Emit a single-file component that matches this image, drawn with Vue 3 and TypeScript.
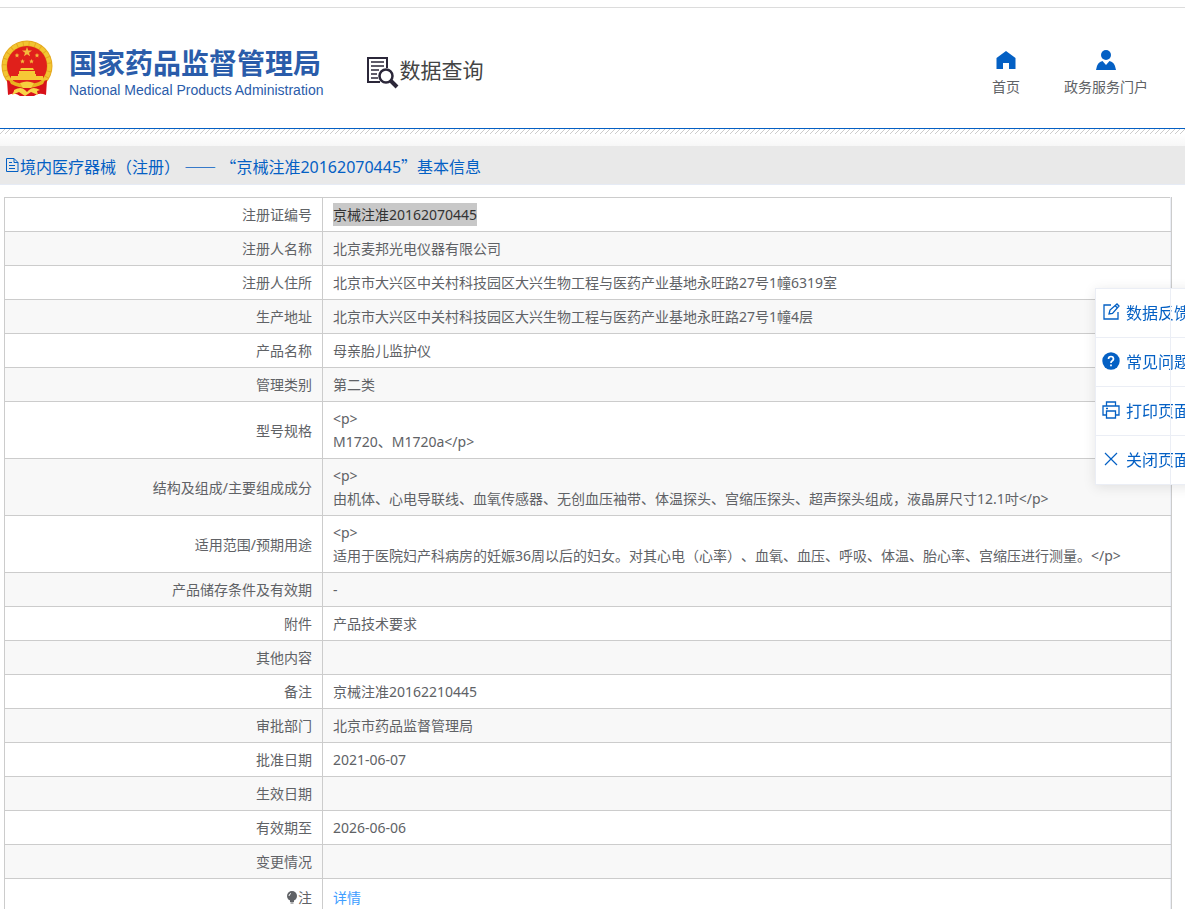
<script setup lang="ts">
interface Row {
  label: string
  value: string
  selected?: boolean
}

const rows: Row[] = [
  { label: '注册证编号', value: '京械注准20162070445', selected: true },
  { label: '注册人名称', value: '北京麦邦光电仪器有限公司' },
  { label: '注册人住所', value: '北京市大兴区中关村科技园区大兴生物工程与医药产业基地永旺路27号1幢6319室' },
  { label: '生产地址', value: '北京市大兴区中关村科技园区大兴生物工程与医药产业基地永旺路27号1幢4层' },
  { label: '产品名称', value: '母亲胎儿监护仪' },
  { label: '管理类别', value: '第二类' },
  { label: '型号规格', value: '<p>\nM1720、M1720a</p>' },
  { label: '结构及组成/主要组成成分', value: '<p>\n由机体、心电导联线、血氧传感器、无创血压袖带、体温探头、宫缩压探头、超声探头组成，液晶屏尺寸12.1吋</p>' },
  { label: '适用范围/预期用途', value: '<p>\n适用于医院妇产科病房的妊娠36周以后的妇女。对其心电（心率）、血氧、血压、呼吸、体温、胎心率、宫缩压进行测量。</p>' },
  { label: '产品储存条件及有效期', value: '-' },
  { label: '附件', value: '产品技术要求' },
  { label: '其他内容', value: '' },
  { label: '备注', value: '京械注准20162210445' },
  { label: '审批部门', value: '北京市药品监督管理局' },
  { label: '批准日期', value: '2021-06-07' },
  { label: '生效日期', value: '' },
  { label: '有效期至', value: '2026-06-06' },
  { label: '变更情况', value: '' },
]
</script>

<template>
  <div class="page" lang="zh-CN">
    <header class="header">
      <div class="brand">
        <svg class="emblem" viewBox="0 0 52 58" aria-hidden="true">
          <circle cx="26" cy="26" r="25.500" fill="#e5a81f" />
          <circle cx="26" cy="26" r="22.500" fill="none" stroke="#f2c531" stroke-width="4" stroke-dasharray="5 1" />
          <circle cx="26" cy="26" r="20" fill="#e0201b" />
          <path d="M6 40 L13 42 Q26 50 39 42 L46 40 L45 55 Q38 52 33 56 H19 Q14 52 7 55Z" fill="#d8121a" />
          <path d="M26 7l1.300 3.400h3.700l-3 2.300 1.100 3.600-3.100-2.100-3.100 2.100 1.100-3.600-3-2.300h3.700z" fill="#f5b93c" />
          <g fill="#f5b93c">
            <path d="M16 13l.7 1.500 1.600.2-1.200 1.100.3 1.600-1.400-.8-1.400.8.3-1.600-1.200-1.100 1.600-.2z" />
            <path d="M36 13l.7 1.500 1.600.2-1.200 1.100.3 1.600-1.400-.8-1.400.8.3-1.600-1.200-1.100 1.600-.2z" />
            <path d="M21.500 19l.7 1.500 1.600.2-1.200 1.100.3 1.600-1.400-.8-1.400.8.3-1.600-1.200-1.100 1.600-.2z" />
            <path d="M30.500 19l.7 1.500 1.600.2-1.200 1.100.3 1.600-1.400-.8-1.400.8.3-1.600-1.200-1.100 1.600-.2z" />
          </g>
          <path d="M20 28h12l1 2H19zM18 31h16v3H18zM17 34h18v2H17zM10 36h32v4H10z" fill="#f6c936" />
          <path d="M8 40q10 4 18 4t18-4l-2 4q-8 4-16 4t-16-4z" fill="#e9b21f" />
          <path d="M19 43q7-3 14 0l-3 5h-8z" fill="#f6cf3f" />
          <path d="M13 50q7-4 11 0l2 2 2-2q4-4 11 0l-3 1 1 4-7-3-6 4-6-4-7 3 2-4z" fill="#f8d548" />
        </svg>
        <div class="brand-text">
          <span class="brand-cn">国家药品监督管理局</span>
          <span class="brand-en">National Medical Products Administration</span>
        </div>
      </div>
      <div class="product">
        <svg class="search-doc" viewBox="0 0 33 33" fill="none" stroke="#2b2739" aria-hidden="true">
          <path d="M14 26H2V2H21v10" stroke-width="2" />
          <path d="M5 6H18M5 10H18M5 14H13M5 18H11M5 22H12" stroke-width="1.500" />
          <circle cx="20" cy="20" r="6.500" stroke-width="2.500" />
          <path d="M25 25l6 6" stroke-width="4" />
        </svg>
        <span>数据查询</span>
      </div>
      <nav class="nav">
        <a href="#" class="nav-item">
          <svg viewBox="0 0 20 20" aria-hidden="true"><path d="M10 1L19.500 8V19H13V13H7V19H.5V8z" fill="#0460c4" /></svg>
          首页
        </a>
        <a href="#" class="nav-item">
          <svg viewBox="0 0 20 20" aria-hidden="true"><circle cx="10" cy="5" r="5" fill="#0460c4" /><path d="M0 20Q1 12 6.500 11L10 15l3.500-4Q19 12 20 20z" fill="#0460c4" /></svg>
          政务服务门户
        </a>
      </nav>
    </header>
    <div class="hatch"></div>

    <main>
      <h1 class="title">
        <svg viewBox="0 0 15 16" fill="none" stroke="#0460c4" aria-hidden="true"><path d="M1.500 1.500h7.500l4 4v9H1.500zM9 1.500v4h4M4 5.500h3M4 8.500h6M4 11.500h6" /></svg>
        <span>境内医疗器械（注册） <span class="wide">——</span> <span class="wide">“</span>京械注准20162070445<span class="wide">”</span>基本信息</span>
      </h1>
      <div class="table-wrap">
        <table class="details">
          <tbody>
            <tr v-for="row in rows" :key="row.label">
              <th scope="row">{{ row.label }}</th>
              <td><span :class="{ selected: row.selected }">{{ row.value }}</span></td>
            </tr>
            <tr class="note">
              <th scope="row">
                <svg viewBox="0 0 12 14" aria-hidden="true"><circle cx="6" cy="6" r="5" fill="#606266" /><path d="M4 10h4v2H4zM4.500 12.500h3v1h-3z" fill="#606266" /><path d="M3 6q0-2 2-2.500" fill="none" stroke="#fff" /></svg>注
              </th>
              <td><a href="#">详情</a></td>
            </tr>
          </tbody>
        </table>
      </div>
    </main>

    <aside class="tools">
      <button type="button">
        <svg viewBox="0 0 18 18" fill="none" stroke="#0460c4" stroke-width="1.300" aria-hidden="true"><path d="M9 2H2v14h14V9M7 11l1-4 7-6 2 2-6.500 7.500zM13.500 3l2 2" /></svg>
        <span>数据反馈</span>
      </button>
      <button type="button">
        <svg viewBox="0 0 18 18" aria-hidden="true"><circle cx="9" cy="9" r="8.700" fill="#0460c4" /><path d="M6.500 7q0-2.500 2.500-2.500T11.500 7Q11.500 8 10 9 9 9.600 9 11M9 12.500v1.700" fill="none" stroke="#fff" stroke-width="1.700" /></svg>
        <span>常见问题</span>
      </button>
      <button type="button">
        <svg viewBox="0 0 18 18" fill="none" stroke="#0460c4" stroke-width="1.300" aria-hidden="true"><path d="M4.500 5V1h9v4M4.500 14H1V5h16v9h-3.500M4.500 10h9v7h-9zM4 7.500h2" /></svg>
        <span>打印页面</span>
      </button>
      <button type="button">
        <svg viewBox="0 0 18 18" fill="none" stroke="#0460c4" stroke-width="1.200" aria-hidden="true"><path d="M3 3l12 12M15 3L3 15" /></svg>
        <span>关闭页面</span>
      </button>
    </aside>
  </div>
</template>

<style>
body {
  background: #fff;
  overflow: hidden;
}
</style>

<style scoped>
.page {
  border-top: 1px solid #dcdcdc;
  margin-top: 7px;
  color: #606266;
  font-family: "Noto Sans", "Noto Sans CJK SC", sans-serif;
  font-size: 14px;
  text-spacing-trim: space-all;
}
.header {
  display: flex;
  align-items: center;
  height: 120px;
  border-bottom: 1px solid #0460c4;
}
.brand {
  display: flex;
  align-items: center;
  gap: 16px;
  padding: 2px 0 0 1px;
}
.emblem {
  width: 52px;
  height: 58px;
}
.brand-text {
  display: flex;
  flex-direction: column;
  padding-top: 6px;
  color: #2a5caa;
}
.brand-cn {
  font-size: 28px;
  font-weight: 700;
  line-height: 36px;
  white-space: nowrap;
}
.brand-en {
  font-family: "Liberation Sans", Arial, sans-serif;
  font-size: 14px;
  line-height: 18px;
  white-space: nowrap;
}
.product {
  display: flex;
  align-items: center;
  margin-left: 43px;
  padding-top: 4px;
  color: #444;
  font-size: 21px;
  line-height: 32px;
  white-space: nowrap;
}
.search-doc {
  width: 33px;
  height: 33px;
  padding-top: 4px;
}
.nav {
  display: flex;
  gap: 44px;
  margin-left: auto;
  padding: 12px 37px 0 0;
}
.nav-item {
  display: flex;
  flex-direction: column;
  align-items: center;
  gap: 6px;
  color: #606266;
  line-height: 22px;
  text-decoration: none;
}
.nav-item svg {
  width: 20px;
  height: 20px;
}
.hatch {
  height: 17px;
  background:
    linear-gradient(to bottom right, transparent 40%, #ccc 50%, transparent 60%) 0 0 / 5px 5px repeat-x,
    linear-gradient(#fff 5px, #f7f7f7);
}
.title {
  display: flex;
  align-items: center;
  height: 38px;
  margin: 0;
  padding-left: 5px;
  border-bottom: 1px solid #e6ebf5;
  background: #e9e9e9;
  color: #0460c4;
  font-size: 16px;
  font-weight: 400;
  line-height: 24px;
  white-space: pre;
}
.title > span {
  padding-top: 2px;
}
.title svg {
  width: 15px;
  height: 16px;
}
.wide {
  font-family: "Noto Sans CJK SC", sans-serif;
}
.table-wrap {
  margin: 12px 13px 0 4px;
  border-right: 1px solid #ccc;
}
.details {
  width: 100%;
  border-collapse: collapse;
  table-layout: fixed;
}
.details th,
.details td {
  padding: 5px 10px;
  border: 1px solid #ccc;
  font-weight: 400;
  line-height: 23px;
  white-space: pre-line;
}
.details th {
  width: 297px;
  text-align: right;
}
.details td {
  border-right-color: #ebeef5;
  text-align: left;
}
.details tr:nth-child(even) {
  background: #f8f8f8;
}
.details td > span {
  display: inline-block;
}
.details .selected {
  background: #c8c8c8;
  color: #333;
}
.details .note th,
.details .note td {
  padding: 7px 10px;
}
.note svg {
  width: 12px;
  height: 14px;
  vertical-align: -1px;
}
.note a {
  color: #409eff;
  text-decoration: none;
}
.tools {
  position: fixed;
  top: 288px;
  right: -12px;
  width: 100px;
  border: 1px solid #ebeef5;
  background: #fff;
  box-shadow: 0 2px 12px rgba(0, 0, 0, 0.1);
}
.tools::after {
  content: "";
  position: absolute;
  top: 0;
  bottom: 0;
  left: 74px;
  width: 1px;
  background: #ebeef5;
}
.tools button {
  display: flex;
  align-items: center;
  gap: 6px;
  width: 100%;
  height: 49px;
  padding: 0 0 2px 6px;
  border: 0;
  border-bottom: 1px solid #ebeef5;
  background: transparent;
  color: #0460c4;
  font-family: inherit;
  font-size: 16px;
  white-space: nowrap;
}
.tools button:last-child {
  height: 48px;
  border-bottom: 0;
}
.tools svg {
  flex: none;
  width: 18px;
  height: 18px;
}
</style>
